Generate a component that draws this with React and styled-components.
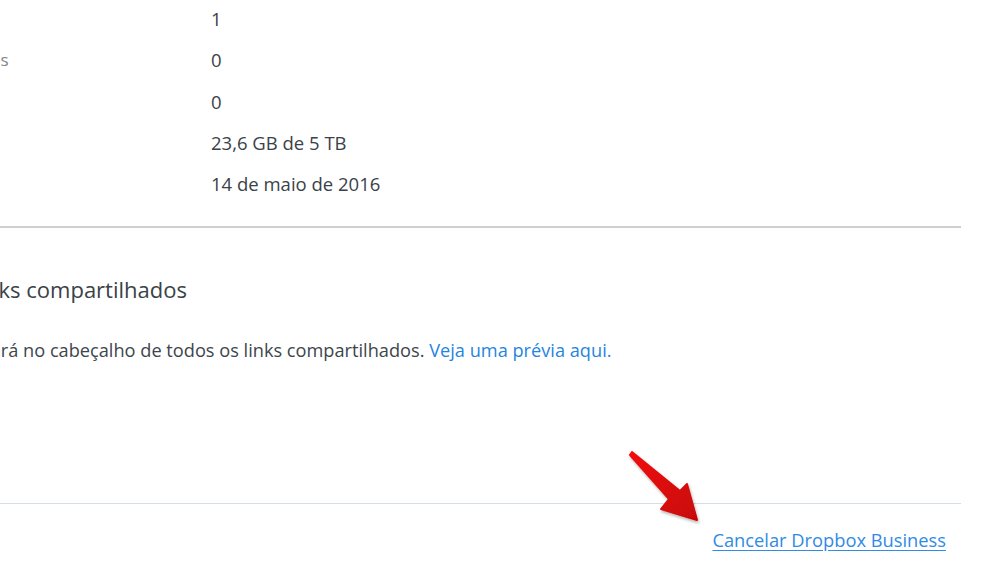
import React from "react";
import styled, { createGlobalStyle } from "styled-components";

const Global = createGlobalStyle`
  html, body { margin: 0; padding: 0; background: #fff; }
  body { font-family: "Open Sans", "Noto Sans", sans-serif; -webkit-font-smoothing: antialiased; }
`;

const Page = styled.div`
  position: relative;
  width: 984px;
  height: 566px;
  overflow: hidden;
  background: #fff;
`;

const Content = styled.div`
  margin-left: ${p => p.$offset}px;
  width: ${p => 961 - p.$offset}px;
  margin-top: -2px;
`;

const InfoTable = styled.div`
  display: flex;
  flex-direction: column;
  padding-bottom: 22px;
  border-bottom: 2px solid #cfcfcf;
`;

const Row = styled.div`
  display: grid;
  grid-template-columns: ${p => 211 - p.$offset}px 1fr;
  height: 41.25px;
  align-items: center;
`;

const Label = styled.div`
  font-size: 17px;
  color: #80868b;
  white-space: nowrap;
`;

const Value = styled.div`
  font-size: 18.5px;
  color: #3a4249;
  white-space: nowrap;
`;

const Section = styled.div`
  padding: 46px 0 0 ${p => p.$inset}px;
  height: 276px;
  box-sizing: border-box;
  border-bottom: 1px solid #d5dde5;
`;

const Heading = styled.h2`
  margin: 0;
  font-size: 22px;
  font-weight: 400;
  color: #3a4248;
  line-height: 30px;
  white-space: nowrap;
`;

const Paragraph = styled.p`
  margin: 34px 0 0;
  font-size: 18.2px;
  color: #3d454c;
  line-height: 24px;
  white-space: nowrap;
`;

const InlineLink = styled.a`
  color: #1f85e0;
  text-decoration: none;
`;

const Footer = styled.div`
  display: flex;
  justify-content: flex-end;
  padding: 24px 15px 0 0;
`;

const FooterLink = styled.a`
  font-size: 18.3px;
  color: #2f8be4;
  text-decoration: underline;
  text-underline-offset: 3px;
  line-height: 24px;
`;

const Arrow = styled.svg`
  position: absolute;
  left: 0;
  top: 0;
  pointer-events: none;
`;

const rows = [
  ["Usuários", "1"],
  ["Convites pendentes", "0"],
  ["Livres", "0"],
  ["Espaço", "23,6 GB de 5 TB"],
  ["Renovação", "14 de maio de 2016"],
];

const OFFSET = -148;

export default function App() {
  return (
    <Page>
      <Global />
      <Content $offset={OFFSET}>
        <InfoTable>
          {rows.map(([l, v]) => (
            <Row key={l} $offset={OFFSET}>
              <Label>{l}</Label>
              <Value>{v}</Value>
            </Row>
          ))}
        </InfoTable>
        <Section $inset={-OFFSET - 32}>
          <Heading>Links compartilhados</Heading>
          <Paragraph>
            Ficará no cabeçalho de todos os links compartilhados.{" "}
            <InlineLink href="#">Veja uma prévia aqui.</InlineLink>
          </Paragraph>
        </Section>
        <Footer>
          <FooterLink href="#">Cancelar Dropbox Business</FooterLink>
        </Footer>
      </Content>
      <Arrow width="984" height="566" viewBox="0 0 984 566">
        <defs>
          <linearGradient id="ag" x1="0" y1="0" x2="1" y2="1">
            <stop offset="0" stopColor="#f01010" />
            <stop offset="1" stopColor="#c80606" />
          </linearGradient>
          <filter id="sh" x="-20%" y="-20%" width="140%" height="140%">
            <feDropShadow dx="1" dy="2" stdDeviation="1.5" floodColor="#000" floodOpacity="0.3" />
          </filter>
        </defs>
        <polygon
          points="632,452 680,491 687,484 697,520 661,509 669,499 630,455"
          fill="url(#ag)"
          stroke="url(#ag)"
          strokeWidth="2"
          strokeLinejoin="round"
          filter="url(#sh)"
        />
      </Arrow>
    </Page>
  );
}
